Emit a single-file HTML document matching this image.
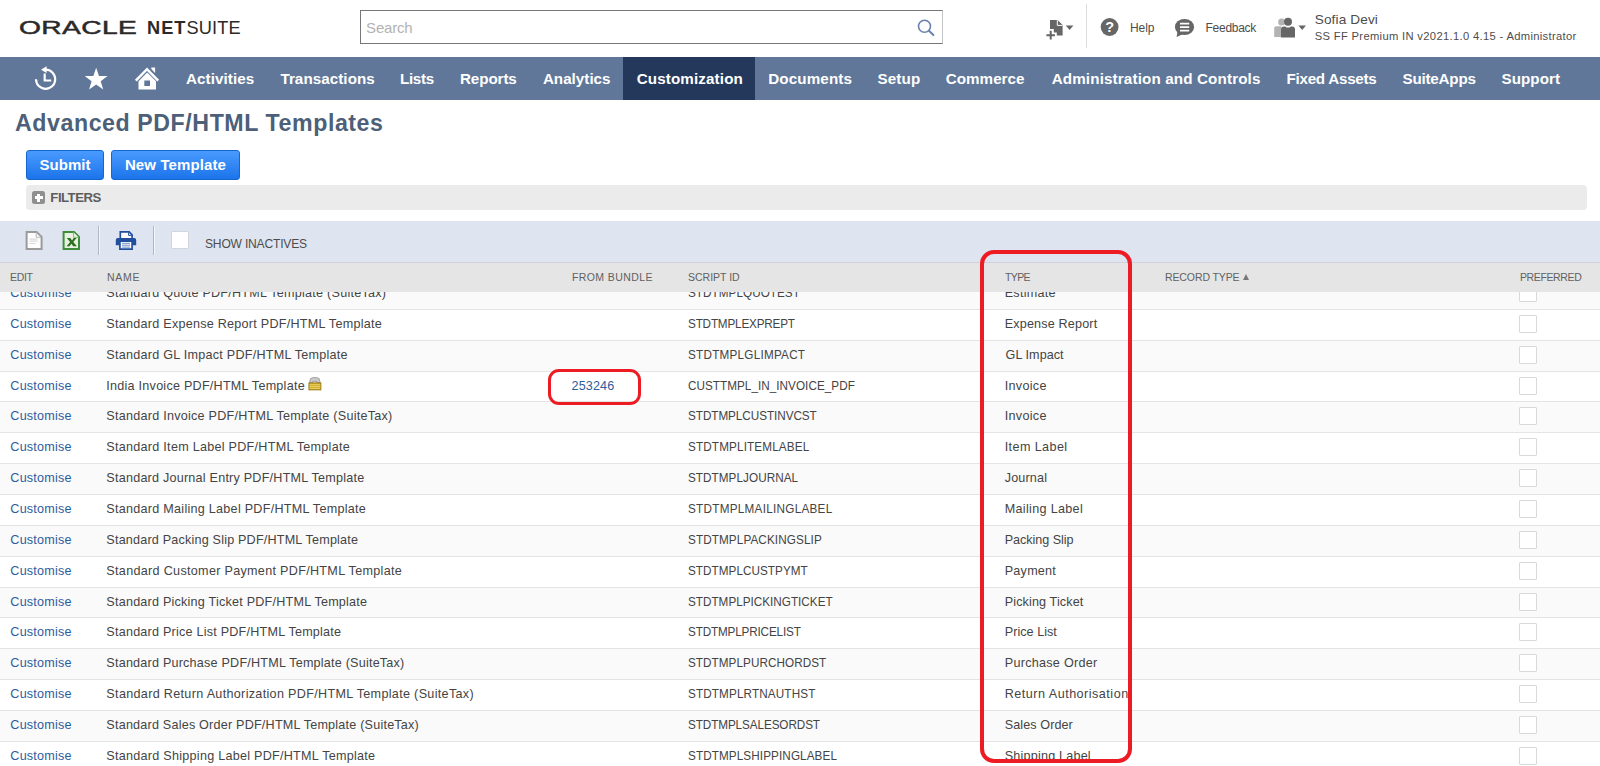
<!DOCTYPE html>
<html lang="en"><head>
<meta charset="utf-8">
<title>Advanced PDF/HTML Templates - NetSuite</title>
<style>
*{box-sizing:border-box;margin:0;padding:0}
html,body{width:1600px;height:766px;overflow:hidden;background:#fff}
body{font-family:"Liberation Sans",sans-serif;color:#333;position:relative}
.abs{position:absolute;white-space:nowrap}
/* header */
#hdr{position:absolute;left:0;top:0;width:1600px;height:57px;background:#fff}
#logo{left:19px;top:16px;height:24px;line-height:24px;color:#2b2a29}
#logo .o{font-size:18.2px;letter-spacing:.25px;display:inline-block;transform:scaleX(1.55);transform-origin:left center;-webkit-text-stroke:.45px #2b2a29}
#logo2{left:147px;top:16px;height:24px;line-height:24px;color:#2b2a29}
#logo2 .n{font-size:18.2px;font-weight:bold;letter-spacing:1px}
#logo2 .s{font-size:18.2px;letter-spacing:.2px}
#search{left:360px;top:10px;width:583px;height:34px;border:1px solid #777;border-right-color:#c4c4c4;background:#fff}
#search span{position:absolute;left:6px;top:8px;font-size:15px;color:#b3b3b3;line-height:18px;letter-spacing:0}
.hl{font-size:12px;color:#4d4d4d;letter-spacing:.25px}
#vsep{left:1086px;top:4px;width:1px;height:44px;background:#dcdcdc}
/* nav */
#nav{position:absolute;left:0;top:57px;width:1600px;height:43px;background:#607799}
#nav .act{position:absolute;left:623px;top:0;width:132px;height:43px;background:#24385b}
#nav .t{position:absolute;top:0;height:43px;line-height:43px;color:#fff;font-weight:bold;font-size:15.2px;letter-spacing:-.1px;white-space:nowrap}
/* title */
#title{left:15px;top:106px;font-size:23.2px;font-weight:bold;color:#4d5f79;line-height:34px;letter-spacing:.35px}
.btn{position:absolute;top:150px;height:30px;border:1px solid #1467cc;border-radius:3px;background:linear-gradient(#4a9bff,#1c74ea);color:#fff;font-weight:bold;font-size:15px;line-height:28px;text-align:center;white-space:nowrap}
#filters{left:26px;top:185px;width:1561px;height:25px;background:#ebebeb;border-radius:4px}
#filters .pl{position:absolute;left:6px;top:6px;width:13px;height:13px;background:#8f8f8f;border-radius:2.5px}
#filters .pl:before{content:"";position:absolute;left:2.5px;top:5.2px;width:8px;height:2.6px;background:#fff}
#filters .pl:after{content:"";position:absolute;left:5.2px;top:2.5px;width:2.6px;height:8px;background:#fff}
#filters span{position:absolute;left:24px;top:0;line-height:25px;font-size:13.2px;font-weight:bold;color:#5c5c5c;letter-spacing:.2px}
/* toolbar */
#tb{position:absolute;left:0;top:221px;width:1600px;height:42px;background:#dfe5f0;border-bottom:1px solid #cfd2d8}
#th{position:absolute;left:0;top:263px;width:1600px;height:29px;background:#e5e5e5;z-index:3}
#th span{position:absolute;top:0;line-height:28px;font-size:11.7px;color:#616161;white-space:nowrap;display:inline-block;transform:scaleX(.9);transform-origin:left center}
/* rows */
.r{position:absolute;left:0;width:1600px;height:31px;border-bottom:1px solid #e4e4e4;background:#fff}
.r.a{background:#fafafa}
.r span,.r a{position:absolute;top:0;line-height:29.5px;font-size:12.6px;white-space:nowrap;color:#444;letter-spacing:.18px}
.r a{color:#2d5c9e;text-decoration:none;left:10px}
.r .n{left:106px}
.r .b{left:571px;color:#2d5c9e}
.r .s{left:688px;letter-spacing:-.25px;display:inline-block;transform:scaleX(.93);transform-origin:left center}
.r .y{left:1004px}
.r i{position:absolute;left:1519px;top:5px;width:18px;height:18px;border:1px solid #d9d9d9;background:#fff;border-radius:1px}
.lock{position:absolute;left:308.300px;top:4.700px}
.arr{position:absolute;left:1243px;top:11px;width:0;height:0;border-left:3.5px solid transparent;border-right:3.5px solid transparent;border-bottom:6px solid #777}
.red{position:absolute;border:4px solid #ed1c24;z-index:5}
</style>
</head>
<body>
<div id="hdr">
  <div id="logo" class="abs"><span class="o">ORACLE</span></div>
  <div id="logo2" class="abs"><span class="n">NET</span><span class="s">SUITE</span></div>
  <div id="search" class="abs"><span style="letter-spacing: -0.216px; left: 5.1px;">Search</span><svg style="position:absolute;left:555px;top:7px" width="20" height="20" viewBox="0 0 20 20"><circle cx="8.5" cy="8.3" r="6" fill="none" stroke="#6882ab" stroke-width="1.6"></circle><path d="M12.9 12.7l4.500 4.300" stroke="#6882ab" stroke-width="2" stroke-linecap="round"></path></svg></div>
  <div id="vsep" class="abs"></div>

  <svg class="abs" style="left:1044px;top:17px" width="34" height="26" viewBox="0 0 34 26">
    <path d="M6 3H13.600L18.600 8V18.600H12.800V15.400H9.800V12H6z" fill="#666"></path>
    <path d="M13.300 3.200V8.400H18.400" fill="none" stroke="#fff" stroke-width="1"></path>
    <path d="M6.700 13.800V22.600M2.400 18.200H11" stroke="#666" stroke-width="2" fill="none"></path>
    <path d="M21.800 8.500h7.600l-3.800 4.600z" fill="#666"></path>
  </svg>
  <svg class="abs" style="left:1099px;top:16px" width="22" height="22" viewBox="0 0 22 22">
    <circle cx="10.6" cy="11" r="8.9" fill="#666"></circle>
    <text x="10.6" y="16.1" text-anchor="middle" font-family="Liberation Sans, sans-serif" font-weight="bold" font-size="14.5" fill="#fff">?</text>
  </svg>
  <div class="abs hl" id="help" style="left: 1130px; top:20px; line-height: 16px; letter-spacing: -0.05px;">Help</div>
  <svg class="abs" style="left:1173px;top:17px" width="24" height="22" viewBox="0 0 24 22">
    <ellipse cx="11.5" cy="10" rx="9.6" ry="8" fill="#666"></ellipse>
    <path d="M4.5 14.5L3.6 20l7-3.2z" fill="#666"></path>
    <path d="M7 6.6h9.2M7 10.1h9.2M7 13.6h9.2" stroke="#fff" stroke-width="1.6"></path>
  </svg>
  <div class="abs hl" id="feedback" style="left: 1205.5px; top:20px; line-height: 16px; letter-spacing: -0.265px;">Feedback</div>
  <svg class="abs" style="left:1272px;top:15px" width="38" height="24" viewBox="0 0 38 24">
    <circle cx="9.6" cy="7" r="3.5" fill="#b3b3b3"></circle>
    <path d="M2.2 22V13.6q0-2.4 2.6-2.4h4.6V22z" fill="#b3b3b3"></path>
    <circle cx="16" cy="6.8" r="4" fill="#666"></circle>
    <path d="M9 22.4v-8q0-3 3-3h1.2q2.8 2.4 5.6 0H20q3 0 3 3v8z" fill="#666"></path>
    <path d="M26.4 10.5h7.6l-3.8 4.6z" fill="#666"></path>
  </svg>
  <div class="abs" id="uname" style="left: 1314.72px; top:10.7px; font-size: 13.6px; line-height: 18px; color: rgb(77, 77, 77); letter-spacing: 0.13px;">Sofia Devi</div>
  <div class="abs" id="urole" style="left: 1314.72px; top:28.4px; font-size: 11.2px; line-height: 16px; color: rgb(77, 77, 77); letter-spacing: 0.334px;">SS FF Premium IN v2021.1.0 4.15 - Administrator</div>
</div>
<div id="nav"><div class="act"></div>
<svg style="position:absolute;left:0;top:0" width="180" height="43" viewBox="0 0 180 43">
  <path d="M45.6 12.7A9.6 9.6 0 1 1 36 22.3" fill="none" stroke="#fff" stroke-width="2.2"></path>
  <path d="M41 12.7L46.6 9.3V16.100z" fill="#fff"></path>
  <path d="M44.7 16.400V23.500H51.200" fill="none" stroke="#fff" stroke-width="2.200"></path>
  <path d="M96.15 10.80L98.97 18.92L107.56 19.09L100.72 24.28L103.20 32.51L96.15 27.60L89.10 32.51L91.58 24.28L84.74 19.09L93.33 18.92z" fill="#fff"></path>
  <path d="M135.800 23.600L147 12.200L158.200 23.600" fill="none" stroke="#fff" stroke-width="2.500"></path>
  <path d="M151.300 10.400h3.800v5.600l-3.800-3.900z" fill="#fff"></path>
  <path d="M138.500 32.600V24.300L147.200 15.600L156 24.300V32.600z" fill="#fff"></path>
  <path d="M144.300 23.500h5.700v5.500h-5.700z" fill="#607799"></path>
</svg>
<span class="t" style="left: 185.9px; letter-spacing: 0.1px;">Activities</span>
<span class="t" style="left: 280.4px; letter-spacing: 0.064px;">Transactions</span>
<span class="t" style="left: 400px; letter-spacing: -0.324px;">Lists</span>
<span class="t" style="left: 460px; letter-spacing: -0.1px;">Reports</span>
<span class="t" style="left: 542.9px; letter-spacing: 0.012px;">Analytics</span>
<span class="t" style="left: 636.69px; letter-spacing: 0.126px;">Customization</span>
<span class="t" style="left: 768.22px; letter-spacing: 0.124px;">Documents</span>
<span class="t" style="left: 877.5px; letter-spacing: 0.125px;">Setup</span>
<span class="t" style="left: 945.79px; letter-spacing: 0.028px;">Commerce</span>
<span class="t" style="left: 1051.68px; letter-spacing: 0.143px;">Administration and Controls</span>
<span class="t" style="left: 1286.5px; letter-spacing: -0.264px;">Fixed Assets</span>
<span class="t" style="left: 1402.5px; letter-spacing: -0.212px;">SuiteApps</span>
<span class="t" style="left: 1501.5px; letter-spacing: 0.05px;">Support</span>
</div>
<div id="title" class="abs" style="letter-spacing: 0.558px; left: 15px;">Advanced PDF/HTML Templates</div>
<div class="btn" style="left:26px;width:78px">Submit</div>
<div class="btn" style="left:111px;width:129px;letter-spacing:.12px">New Template</div>
<div id="filters" class="abs"><div class="pl"></div><span style="letter-spacing: -0.52px; left: 24.36px;">FILTERS</span></div>
<div id="tb">
<svg style="position:absolute;left:24px;top:9px" width="20" height="22" viewBox="0 0 20 22">
  <path d="M2.600 1.900H12.600L17.600 6.900V19H2.600z" fill="#fdfdfd" stroke="#9a9a9a" stroke-width="2"/>
  <path d="M12.200 2.400V7.300H17.100" fill="none" stroke="#b9b9b9" stroke-width="1"/>
  <path d="M5.500 9.200H13.500M5.500 11.200H13.500M5.500 13.500H11.500" stroke="#dadada" stroke-width="1.200"/>
</svg>
<svg style="position:absolute;left:61px;top:9px" width="20" height="22" viewBox="0 0 20 22">
  <path d="M2.600 1.900H13L18 6.900V19H2.600z" fill="#e6f2df" stroke="#3f8c3a" stroke-width="2"/>
  <path d="M12.600 2.400V7.300H17.500" fill="#f4faf1" stroke="#7fb87a" stroke-width="1"/>
  <path d="M5.800 8H9.400L11 10.400L12.700 8H15.600L12.300 12L15.900 16.200H12.200L10.400 13.700L8.500 16.200H5.600L9.100 12z" fill="#2f6f22"/>
</svg>
<div style="position:absolute;left:98px;top:5px;width:1px;height:29px;background:#b3b7c0"></div>
<div style="position:absolute;left:99px;top:5px;width:1px;height:29px;background:#f3f5f9"></div>
<svg style="position:absolute;left:115px;top:9px" width="22" height="21" viewBox="0 0 22 21">
  <path d="M5.300 1.900H14.200L17.100 4.800V9H5.300z" fill="#fff" stroke="#214f9e" stroke-width="1.700"/>
  <path d="M13.600 2.400V5.400H16.600" fill="none" stroke="#214f9e" stroke-width="1"/>
  <path d="M2.800 7.900H19.200A2 2 0 0 1 21.200 9.900V15.200H.800V9.900A2 2 0 0 1 2.800 7.900z" fill="#214f9e"/>
  <path d="M4.900 11.200H17.100V19.200H4.900z" fill="#fff" stroke="#214f9e" stroke-width="1.700"/>
  <path d="M7 13.300H15M7 15.200H15M7 17.100H15" stroke="#6f8fc4" stroke-width="1"/>
</svg>
<div style="position:absolute;left:153px;top:5px;width:1px;height:29px;background:#b3b7c0"></div>
<div style="position:absolute;left:154px;top:5px;width:1px;height:29px;background:#f3f5f9"></div>
<div style="position:absolute;left:171px;top:10px;width:18px;height:18px;background:#fff;border:1px solid #d3d6dc;border-radius:1px"></div>
<span id="showin" style="position: absolute; left: 204.68px; top: 15px; line-height: 16px; font-size: 13px; color: rgb(77, 77, 77); white-space: nowrap; letter-spacing: -0.225px; transform: scaleX(0.93); transform-origin: left center;">SHOW INACTIVES</span>
</div>
<div id="th">
<span style="left: 10.37px; letter-spacing: -0.39px;">EDIT</span>
<span style="left: 106.79px; letter-spacing: 0.75px;">NAME</span>
<span style="left: 571.88px; letter-spacing: 0.43px;">FROM BUNDLE</span>
<span style="left: 688px; letter-spacing: -0.028px;">SCRIPT ID</span>
<span style="left: 1005.45px; letter-spacing: -0.69px;">TYPE</span>
<span style="left: 1165.45px; letter-spacing: -0.135px;">RECORD TYPE</span>
<span style="left: 1520.08px; letter-spacing: -0.437px;">PREFERRED</span>
<b class="arr"></b></div>
<div class="r a" style="top:279px;height:31px"><a style="letter-spacing: 0.203px; left: 10.36px;">Customise</a><span class="n" style="letter-spacing: 0.24px; left: 106.36px;">Standard Quote PDF/HTML Template (SuiteTax)</span><span class="s" style="letter-spacing: 0.05px; left: 688.2px;">STDTMPLQUOTEST</span><span class="y" style="letter-spacing: 0.25px; left: 1004.72px;">Estimate</span><i></i></div>
<div class="r" style="top:310px;height:31px"><a style="letter-spacing: 0.203px; left: 10.36px;">Customise</a><span class="n" style="letter-spacing: 0.251px; left: 106.36px;">Standard Expense Report PDF/HTML Template</span><span class="s" style="letter-spacing: -0.194px; left: 687.91px;">STDTMPLEXPREPT</span><span class="y" style="letter-spacing: 0.167px; left: 1004.72px;">Expense Report</span><i></i></div>
<div class="r a" style="top:341px;height:31px"><a style="letter-spacing: 0.203px; left: 10.36px;">Customise</a><span class="n" style="letter-spacing: 0.247px; left: 106.36px;">Standard GL Impact PDF/HTML Template</span><span class="s" style="letter-spacing: 0.256px; left: 687.91px;">STDTMPLGLIMPACT</span><span class="y" style="letter-spacing: 0.046px; left: 1005.62px;">GL Impact</span><i></i></div>
<div class="r" style="top:372px;height:30px"><a style="letter-spacing: 0.203px; left: 10.36px;">Customise</a><span class="n" style="letter-spacing: 0.24px; left: 106.36px;">India Invoice PDF/HTML Template</span><svg class="lock" width="14" height="14" viewBox="0 0 14 14"><path d="M1.700 6.200V4.600Q1.700 .600 5 .600H8.700Q12 .600 12 4.600V6.200H9V4.400H4.700V6.200z" fill="#c9c9c9" stroke="#8e8e8e" stroke-width=".7"></path><rect x=".900" y="5.900" width="12" height="7" fill="#d2ad2f" stroke="#8c6a08" stroke-width=".800"></rect><path d="M1.600 7.700H12.200M1.600 9.600H12.200M1.600 11.400H12.200" stroke="#ecd566" stroke-width=".900"></path></svg><span class="b" style="letter-spacing: 0.144px; left: 571.54px;">253246</span><span class="s" style="letter-spacing: 0.041px; left: 687.91px;">CUSTTMPL_IN_INVOICE_PDF</span><span class="y" style="letter-spacing: 0.3px; left: 1004.72px;">Invoice</span><i></i></div>
<div class="r a" style="top:402px;height:31px"><a style="letter-spacing: 0.203px; left: 10.36px;">Customise</a><span class="n" style="letter-spacing: 0.245px; left: 106.36px;">Standard Invoice PDF/HTML Template (SuiteTax)</span><span class="s" style="letter-spacing: -0.049px; left: 687.91px;">STDTMPLCUSTINVCST</span><span class="y" style="letter-spacing: 0.3px; left: 1004.72px;">Invoice</span><i></i></div>
<div class="r" style="top:433px;height:31px"><a style="letter-spacing: 0.203px; left: 10.36px;">Customise</a><span class="n" style="letter-spacing: 0.265px; left: 106.36px;">Standard Item Label PDF/HTML Template</span><span class="s" style="letter-spacing: 0.152px; left: 687.91px;">STDTMPLITEMLABEL</span><span class="y" style="letter-spacing: 0.4px; left: 1004.72px;">Item Label</span><i></i></div>
<div class="r a" style="top:464px;height:31px"><a style="letter-spacing: 0.203px; left: 10.36px;">Customise</a><span class="n" style="letter-spacing: 0.221px; left: 106.36px;">Standard Journal Entry PDF/HTML Template</span><span class="s" style="letter-spacing: 0.061px; left: 687.91px;">STDTMPLJOURNAL</span><span class="y" style="letter-spacing: 0.15px; left: 1004.72px;">Journal</span><i></i></div>
<div class="r" style="top:495px;height:31px"><a style="letter-spacing: 0.203px; left: 10.36px;">Customise</a><span class="n" style="letter-spacing: 0.262px; left: 106.36px;">Standard Mailing Label PDF/HTML Template</span><span class="s" style="letter-spacing: 0.295px; left: 687.91px;">STDTMPLMAILINGLABEL</span><span class="y" style="letter-spacing: 0.315px; left: 1004.72px;">Mailing Label</span><i></i></div>
<div class="r a" style="top:526px;height:31px"><a style="letter-spacing: 0.203px; left: 10.36px;">Customise</a><span class="n" style="letter-spacing: 0.193px; left: 106.36px;">Standard Packing Slip PDF/HTML Template</span><span class="s" style="letter-spacing: 0.114px; left: 687.91px;">STDTMPLPACKINGSLIP</span><span class="y" style="letter-spacing: -0.049px; left: 1004.72px;">Packing Slip</span><i></i></div>
<div class="r" style="top:557px;height:31px"><a style="letter-spacing: 0.203px; left: 10.36px;">Customise</a><span class="n" style="letter-spacing: 0.301px; left: 106.36px;">Standard Customer Payment PDF/HTML Template</span><span class="s" style="letter-spacing: 0.052px; left: 687.91px;">STDTMPLCUSTPYMT</span><span class="y" style="letter-spacing: 0.24px; left: 1004.72px;">Payment</span><i></i></div>
<div class="r a" style="top:588px;height:30px"><a style="letter-spacing: 0.203px; left: 10.36px;">Customise</a><span class="n" style="letter-spacing: 0.217px; left: 106.36px;">Standard Picking Ticket PDF/HTML Template</span><span class="s" style="letter-spacing: 0.009px; left: 687.91px;">STDTMPLPICKINGTICKET</span><span class="y" style="letter-spacing: 0.124px; left: 1004.72px;">Picking Ticket</span><i></i></div>
<div class="r" style="top:618px;height:31px"><a style="letter-spacing: 0.203px; left: 10.36px;">Customise</a><span class="n" style="letter-spacing: 0.22px; left: 106.36px;">Standard Price List PDF/HTML Template</span><span class="s" style="letter-spacing: -0.172px; left: 687.91px;">STDTMPLPRICELIST</span><span class="y" style="letter-spacing: 0.04px; left: 1004.72px;">Price List</span><i></i></div>
<div class="r a" style="top:649px;height:31px"><a style="letter-spacing: 0.203px; left: 10.36px;">Customise</a><span class="n" style="letter-spacing: 0.212px; left: 106.36px;">Standard Purchase PDF/HTML Template (SuiteTax)</span><span class="s" style="letter-spacing: 0.059px; left: 687.91px;">STDTMPLPURCHORDST</span><span class="y" style="letter-spacing: 0.278px; left: 1004.72px;">Purchase Order</span><i></i></div>
<div class="r" style="top:680px;height:31px"><a style="letter-spacing: 0.203px; left: 10.36px;">Customise</a><span class="n" style="letter-spacing: 0.316px; left: 106.36px;">Standard Return Authorization PDF/HTML Template (SuiteTax)</span><span class="s" style="letter-spacing: 0.14px; left: 687.91px;">STDTMPLRTNAUTHST</span><span class="y" style="letter-spacing: 0.49px; left: 1004.72px;">Return Authorisation</span><i></i></div>
<div class="r a" style="top:711px;height:31px"><a style="letter-spacing: 0.203px; left: 10.36px;">Customise</a><span class="n" style="letter-spacing: 0.209px; left: 106.36px;">Standard Sales Order PDF/HTML Template (SuiteTax)</span><span class="s" style="letter-spacing: -0.094px; left: 687.91px;">STDTMPLSALESORDST</span><span class="y" style="letter-spacing: 0.09px; left: 1004.72px;">Sales Order</span><i></i></div>
<div class="r" style="top:742px;height:31px"><a style="letter-spacing: 0.203px; left: 10.36px;">Customise</a><span class="n" style="letter-spacing: 0.26px; left: 106.36px;">Standard Shipping Label PDF/HTML Template</span><span class="s" style="letter-spacing: 0.105px; left: 687.91px;">STDTMPLSHIPPINGLABEL</span><span class="y" style="letter-spacing: 0.2px; left: 1004.72px;">Shipping Label</span><i></i></div>
<div class="red" style="left:980px;top:250px;width:152px;height:513px;border-radius:14px"></div>
<div class="red" style="left:548px;top:369px;width:93px;height:36px;border-width:3.6px;border-radius:11px"></div>





</body></html>
